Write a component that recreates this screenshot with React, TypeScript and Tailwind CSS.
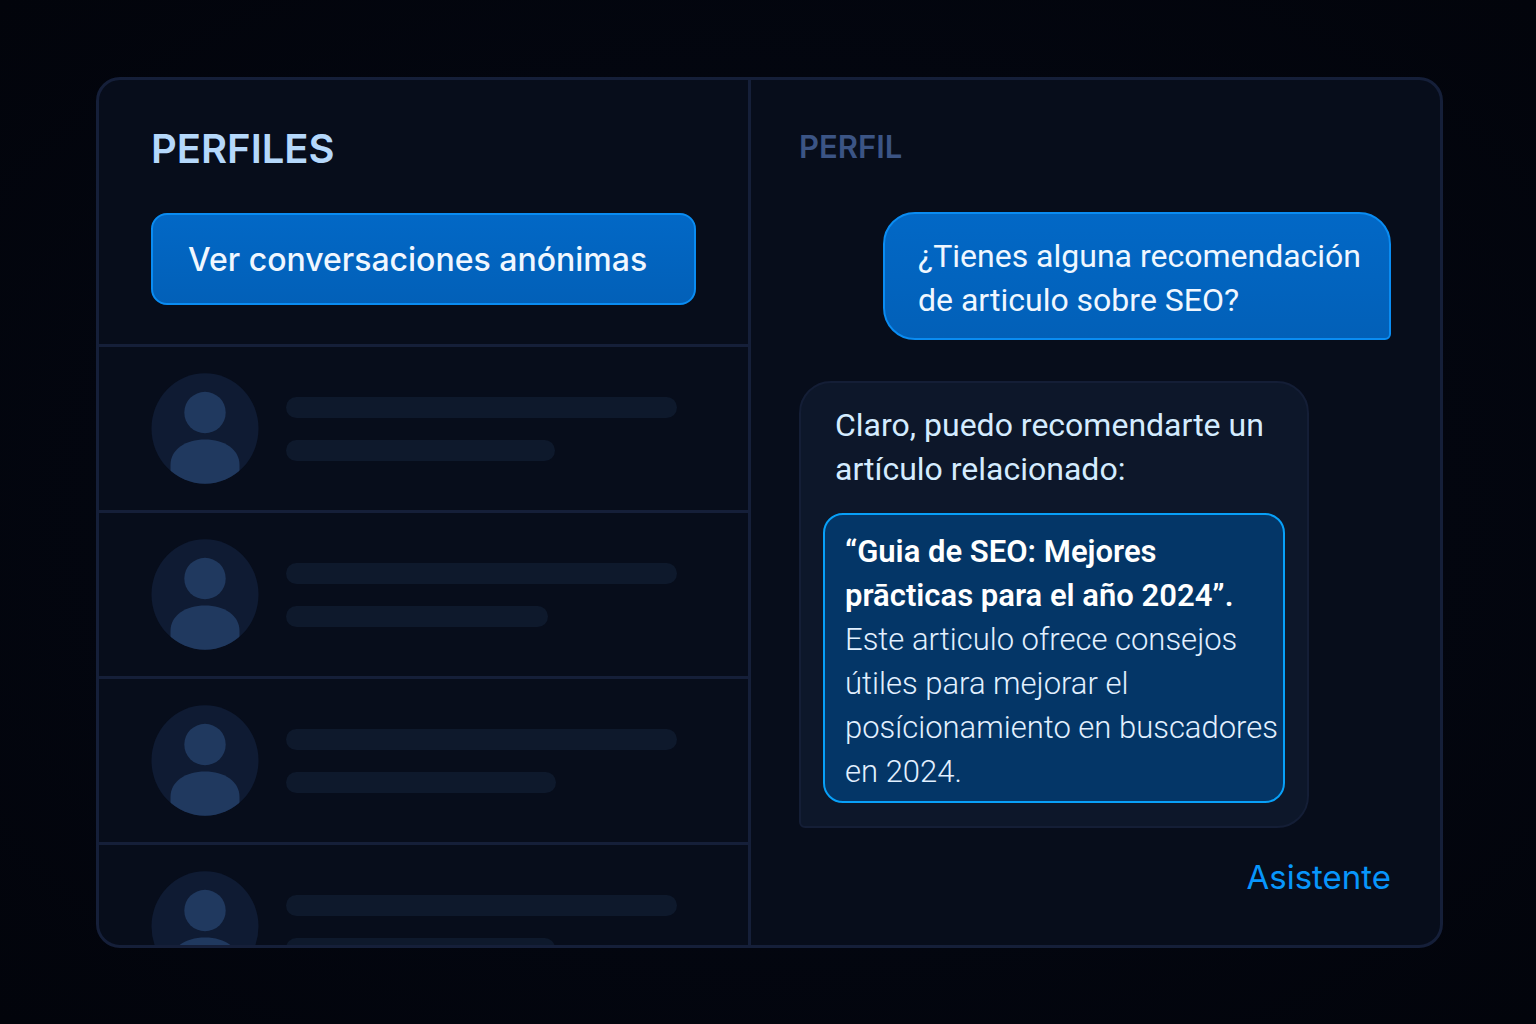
const profiles = [
  { id: 1, name: 'w-[391px]', detail: 'w-[269px]' },
  { id: 2, name: 'w-[391px]', detail: 'w-[262px]' },
  { id: 3, name: 'w-[391px]', detail: 'w-[270px]' },
  { id: 4, name: 'w-[391px]', detail: 'w-[269px]' },
]

const Avatar = () => (
  <svg viewBox="0 0 108 111" className="w-[108px] h-[111px] shrink-0" aria-hidden="true">
    <defs>
      <clipPath id="avatar-clip">
        <ellipse cx="54" cy="55.5" rx="53.5" ry="55.3" />
      </clipPath>
    </defs>
    <ellipse cx="54" cy="55.5" rx="53.5" ry="55.3" fill="#0f1b33" />
    <circle cx="54" cy="39.5" r="20.7" fill="#20395f" />
    <path
      d="M19.5 111V92C19.5 76 35 66.5 54 66.5S88.5 76 88.5 92V111Z"
      fill="#20395f"
      clipPath="url(#avatar-clip)"
    />
  </svg>
)

const Sidebar = () => (
  <aside className="flex flex-col border-r-3 border-[#151f39]">
    <div className="px-[52px] pt-11 pb-[39px]">
      <h1 className="text-[40px] leading-[50px] font-semibold text-[#b5d8fb]">PERFILES</h1>
      <button
        type="button"
        className="mt-[39px] w-full rounded-2xl border-2 border-[#0a8cf2] bg-linear-to-b from-[#0268c6] to-[#0260b8] px-[35px] pt-[21px] pb-[19px] text-left text-[32px] leading-12 font-medium text-[#f0f7ff]"
      >
        Ver conversaciones anónimas
      </button>
    </div>

    <ul className="min-h-0 grow basis-0 overflow-hidden">
      {profiles.map((profile) => (
        <li key={profile.id} className="flex gap-[27px] border-t-3 border-[#151f39] px-[52px] py-[26px]">
          <Avatar />
          <div className="min-w-0 space-y-[22px] pt-6">
            <div className={`h-[21px] max-w-full rounded-full bg-[#0e192c] ${profile.name}`} />
            <div className={`h-[21px] max-w-full rounded-full bg-[#0e192c] ${profile.detail}`} />
          </div>
        </li>
      ))}
    </ul>
  </aside>
)

const Chat = () => (
  <section className="flex flex-col pt-[47px] pr-[49px] pb-[43px] pl-12">
    <h2 className="text-[31px] leading-10 font-semibold text-[#3b5485]">PERFIL</h2>

    <div className="mt-[45px] w-[508px] max-w-full self-end rounded-[32px] rounded-br-md border-2 border-[#0a8cf2] bg-linear-to-b from-[#0268c6] to-[#0260b8] px-[33px] pt-5 pb-4 font-[Roboto,sans-serif] text-[32px] leading-11 whitespace-nowrap text-[#f0f7ff]">
      ¿Tienes alguna recomendación
      <br />
      de articulo sobre SEO?
    </div>

    <div className="mt-[41px] w-[510px] max-w-full rounded-[32px] rounded-bl-md border-2 border-[#141e36] bg-[#0d172a] px-[22px] pt-5 pb-[23px] font-[Roboto,sans-serif] text-[32px] leading-11">
      <p className="px-3 text-[#d4ecff]">
        Claro, puedo recomendarte un
        <br />
        artículo relacionado:
      </p>
      <article className="mt-[22px] rounded-[20px] border-2 border-[#08a0f8] bg-[#043667] pt-[15px] pb-[7px] pl-[20px] text-[31px] whitespace-nowrap text-[#e2f0ff]">
        <h3 className="font-semibold text-white">
          “Guia de SEO: Mejores
          <br />
          prācticas para el año 2024”.
        </h3>
        <p className="font-light">
          Este articulo ofrece consejos
          <br />
          útiles para mejorar el
          <br />
          posícionamiento en buscadores
          <br />
          en 2024.
        </p>
      </article>
    </div>

    <p className="mt-6 self-end text-[33px] leading-[50px] text-[#0796fc]">Asistente</p>
  </section>
)

const App = () => {
  return (
    <main className="flex min-h-screen items-center bg-[#03060e] bg-radial from-[#050a16] to-[#02040b] pr-[93px] pl-24 font-[Inter,sans-serif]">
      <div className="grid w-full grid-cols-[652fr_689fr] overflow-hidden rounded-3xl border-3 border-[#151f39] bg-[#070d1b]">
        <Sidebar />
        <Chat />
      </div>
    </main>
  )
}

export default App
